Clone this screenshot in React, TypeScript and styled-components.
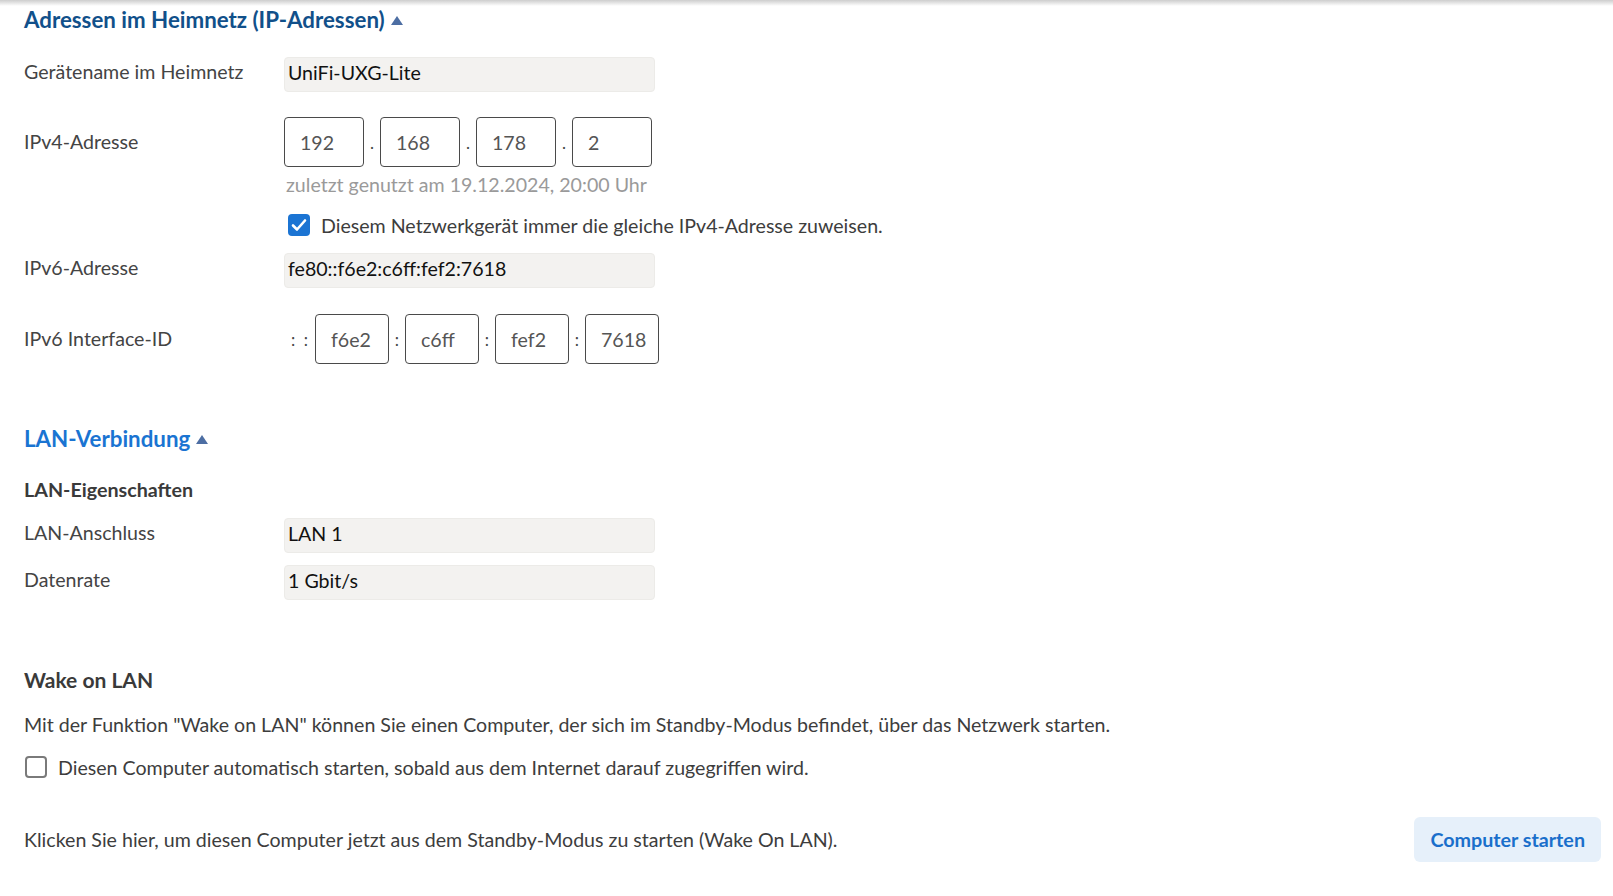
import React from "react";
import styled, { createGlobalStyle } from "styled-components";

const GlobalStyle = createGlobalStyle`
    html, body {
        margin: 0;
        padding: 0;
        background: #fff;
        font-family: Lato, "Liberation Sans", sans-serif;
    }
`;

const TopShade = styled.div`
    height: 6px;
    background: linear-gradient(#cdcdcd, #ffffff);
`;

const Page = styled.div`
    padding: 0 12px 0 24px;
    color: #3d3d3d;
    font-size: 19.6px;
`;

const SectionTitle = styled.h2<{ $tone: "dark" | "bright"; $gap: number }>`
    margin: ${p => p.$gap}px 0 0;
    height: 28px;
    line-height: 28px;
    font-size: 22.3px;
    font-weight: 700;
    color: ${p => (p.$tone === "dark" ? "#11508a" : "#1a74d2")};
    display: flex;
    align-items: center;
    gap: 6px;
`;

const SubTitle = styled.h3<{ $gap: number; $size?: number }>`
    margin: ${p => p.$gap}px 0 0;
    height: 28px;
    line-height: 28px;
    font-size: ${p => p.$size ?? 19.7}px;
    font-weight: 700;
    color: #3a3a3a;
`;

const Row = styled.div<{ $gap: number; $height: number; $top?: boolean }>`
    margin-top: ${p => p.$gap}px;
    height: ${p => p.$height}px;
    display: flex;
    align-items: ${p => (p.$top ? "flex-start" : "center")};
`;

const Label = styled.div<{ $top?: boolean }>`
    width: 260px;
    flex: none;
    color: #444;
    line-height: 24px;
    padding-top: ${p => (p.$top ? 3 : 0)}px;
`;

const ReadOnly = styled.div`
    width: 371px;
    height: 35px;
    box-sizing: border-box;
    padding: 3px 3px 0;
    line-height: 24px;
    background: #f3f2f0;
    border: 1px solid #ecebe8;
    border-radius: 4px;
    color: #111;
`;

const Octet = styled.div<{ $width: number }>`
    width: ${p => p.$width}px;
    height: 50px;
    box-sizing: border-box;
    border: 1px solid #4a4a4a;
    border-radius: 4px;
    padding-left: 15px;
    display: flex;
    align-items: center;
    color: #555;
`;

const Sep = styled.span<{ $width: number }>`
    width: ${p => p.$width}px;
    text-align: center;
    color: #444;
    font-size: 17px;
    white-space: pre;
`;

const Indent = styled.div`
    padding-left: 262px;
`;

const Hint = styled.div`
    margin-top: 6px;
    line-height: 24px;
    color: #9a9a9a;
`;

const CheckRow = styled.label<{ $gap: number; $indent?: number }>`
    margin-top: ${p => p.$gap}px;
    padding-left: ${p => p.$indent ?? 0}px;
    height: 24px;
    display: flex;
    align-items: center;
    gap: 11px;
    color: #3d3d3d;
`;

const Box = styled.span<{ $checked: boolean }>`
    width: 22px;
    height: 22px;
    flex: none;
    box-sizing: border-box;
    border-radius: 4px;
    display: inline-flex;
    align-items: center;
    justify-content: center;
    background: ${p => (p.$checked ? "#1b74d3" : "#fff")};
    border: ${p => (p.$checked ? "none" : "2px solid #7a7a7a")};
`;

const Paragraph = styled.p`
    margin: 19px 0 0;
    line-height: 24px;
    color: #3d3d3d;
`;

const ActionRow = styled.div`
    margin-top: 38px;
    display: flex;
    align-items: center;
    justify-content: space-between;
    height: 45px;
`;

const StartButton = styled.button`
    height: 45px;
    padding: 0 16px;
    border: none;
    border-radius: 6px;
    background: #e6f0fa;
    color: #1a6fcb;
    font-family: inherit;
    font-size: 19.7px;
    font-weight: 700;
    cursor: pointer;
`;

const Caret = () => (
    <svg width="12" height="9" viewBox="0 0 12 9" aria-hidden="true">
        <path d="M6 0 L12 9 L0 9 Z" fill="#4d6ea3" />
    </svg>
);

const Check = ({ checked }: { checked: boolean }) => (
    <Box $checked={checked}>
        {checked && (
            <svg width="16" height="14" viewBox="0 0 16 14" aria-hidden="true">
                <path d="M2 7.5 L6 11.5 L14 2.5" fill="none" stroke="#fff" strokeWidth="2.6" strokeLinecap="round" strokeLinejoin="round" />
            </svg>
        )}
    </Box>
);

const ipv4 = ["192", "168", "178", "2"];
const ifaceId = ["f6e2", "c6ff", "fef2", "7618"];

export default function App() {
    return (
        <>
            <GlobalStyle />
            <TopShade />
            <Page>
                <SectionTitle $tone="dark" $gap={0}>
                    Adressen im Heimnetz (IP-Adressen) <Caret />
                </SectionTitle>

                <Row $gap={23} $height={35} $top>
                    <Label $top>Gerätename im Heimnetz</Label>
                    <ReadOnly>UniFi-UXG-Lite</ReadOnly>
                </Row>

                <Row $gap={25} $height={50}>
                    <Label>IPv4-Adresse</Label>
                    {ipv4.map((v, i) => (
                        <React.Fragment key={i}>
                            {i > 0 && <Sep $width={16}>.</Sep>}
                            <Octet $width={80}>{v}</Octet>
                        </React.Fragment>
                    ))}
                </Row>
                <Indent>
                    <Hint>zuletzt genutzt am 19.12.2024, 20:00 Uhr</Hint>
                </Indent>
                <CheckRow $gap={16} $indent={264}>
                    <Check checked />
                    Diesem Netzwerkgerät immer die gleiche IPv4-Adresse zuweisen.
                </CheckRow>

                <Row $gap={16} $height={35} $top>
                    <Label $top>IPv6-Adresse</Label>
                    <ReadOnly>fe80::f6e2:c6ff:fef2:7618</ReadOnly>
                </Row>

                <Row $gap={26} $height={50}>
                    <Label>IPv6 Interface-ID</Label>
                    <Sep $width={31}>:  :</Sep>
                    {ifaceId.map((v, i) => (
                        <React.Fragment key={i}>
                            {i > 0 && <Sep $width={16}>:</Sep>}
                            <Octet $width={74}>{v}</Octet>
                        </React.Fragment>
                    ))}
                </Row>

                <SectionTitle $tone="bright" $gap={61}>
                    LAN-Verbindung <Caret />
                </SectionTitle>

                <SubTitle $gap={23}>LAN-Eigenschaften</SubTitle>

                <Row $gap={14} $height={35} $top>
                    <Label $top>LAN-Anschluss</Label>
                    <ReadOnly>LAN 1</ReadOnly>
                </Row>
                <Row $gap={12} $height={35} $top>
                    <Label $top>Datenrate</Label>
                    <ReadOnly>1 Gbit/s</ReadOnly>
                </Row>

                <SubTitle $gap={66} $size={21}>Wake on LAN</SubTitle>
                <Paragraph>
                    Mit der Funktion "Wake on LAN" können Sie einen Computer, der sich im Standby-Modus befindet, über das Netzwerk starten.
                </Paragraph>
                <CheckRow $gap={18} $indent={1}>
                    <Check checked={false} />
                    Diesen Computer automatisch starten, sobald aus dem Internet darauf zugegriffen wird.
                </CheckRow>

                <ActionRow>
                    <span>Klicken Sie hier, um diesen Computer jetzt aus dem Standby-Modus zu starten (Wake On LAN).</span>
                    <StartButton>Computer starten</StartButton>
                </ActionRow>
            </Page>
        </>
    );
}
